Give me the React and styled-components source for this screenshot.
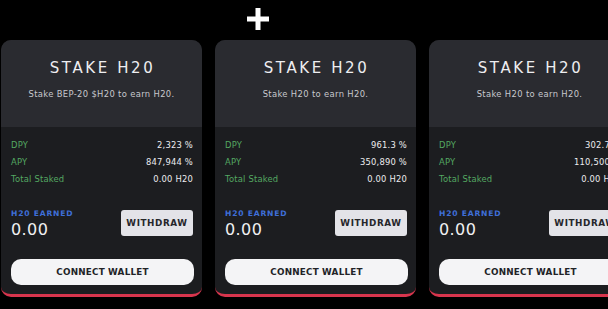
import React from "react";
import styled, { createGlobalStyle } from "styled-components";

const Global = createGlobalStyle`
  html, body { margin: 0; padding: 0; background: #000; overflow: hidden; }
  body { width: 608px; height: 309px; font-family: "DejaVu Sans", "Liberation Sans", sans-serif; }
`;

const Page = styled.div`
  width: 608px;
  height: 309px;
  overflow: hidden;
  background: #000;
  display: flex;
  flex-direction: column;
`;

const TopBar = styled.div`
  height: 40px;
  display: flex;
  align-items: flex-start;
  padding-left: 247px;
  padding-top: 8px;
  box-sizing: border-box;
`;

const Row = styled.div`
  display: flex;
  gap: 13px;
  padding-left: 1px;
`;

const Card = styled.div`
  flex: 0 0 201px;
  width: 201px;
  height: 257px;
  box-sizing: border-box;
  border-radius: 10px;
  overflow: hidden;
  background: #1c1d20;
  border-bottom: 3px solid #d8354d;
  display: flex;
  flex-direction: column;
`;

const Header = styled.div`
  height: 87px;
  background: #2a2b30;
  display: flex;
  flex-direction: column;
  align-items: center;
  padding-top: 20px;
  box-sizing: border-box;
`;

const Title = styled.div`
  color: #eeeef0;
  font-size: 15px;
  line-height: 16px;
  letter-spacing: 2.6px;
  font-weight: 400;
  margin-left: 2px;
`;

const Subtitle = styled.div`
  margin-top: 13px;
  color: #c8c9ce;
  font-size: 8.4px;
  line-height: 10px;
  letter-spacing: 0.35px;
`;

const Body = styled.div`
  padding: 9px 9px 0 10px;
  display: flex;
  flex-direction: column;
`;

const Stat = styled.div`
  display: flex;
  justify-content: space-between;
  height: 17px;
  align-items: center;
  font-size: 8.4px;
  letter-spacing: 0.2px;
`;

const Label = styled.span`
  color: #54a862;
`;

const Value = styled.span`
  color: #ececef;
  white-space: nowrap;
`;

const Earned = styled.div`
  margin-top: 22px;
  height: 32px;
  display: flex;
  justify-content: space-between;
  align-items: flex-start;
`;

const EarnedInfo = styled.div`
  display: flex;
  flex-direction: column;
`;

const EarnedLabel = styled.div`
  color: #3f6fd8;
  font-size: 7.6px;
  line-height: 10px;
  font-weight: 700;
  letter-spacing: 0.8px;
`;

const EarnedValue = styled.div`
  color: #f0f0f2;
  font-size: 16px;
  line-height: 22px;
  letter-spacing: 0.4px;
`;

const Withdraw = styled.button`
  margin-top: 1px;
  width: 72px;
  height: 26px;
  flex: 0 0 72px;
  border: none;
  border-radius: 3px;
  background: #e3e3e8;
  color: #26272b;
  font-family: inherit;
  font-size: 8.8px;
  font-weight: 700;
  letter-spacing: 0.6px;
  padding: 0;
  white-space: nowrap;
`;

const Connect = styled.button`
  margin-top: 18px;
  width: 183px;
  height: 26px;
  border: none;
  border-radius: 10px;
  background: #f4f4f6;
  color: #222327;
  font-family: inherit;
  font-size: 8.8px;
  font-weight: 700;
  letter-spacing: 0.2px;
  padding: 0;
`;

const Plus = () => (
  <svg width="22" height="22" viewBox="0 0 22 22">
    <rect x="8.5" y="0" width="5" height="22" fill="#fff" />
    <rect x="0" y="8.5" width="22" height="5" fill="#fff" />
  </svg>
);

const pools = [
  { sub: "Stake BEP-20 $H20 to earn H20.", dpy: "2,323 %", apy: "847,944 %" },
  { sub: "Stake H20 to earn H20.", dpy: "961.3 %", apy: "350,890 %" },
  { sub: "Stake H20 to earn H20.", dpy: "302.7 %", apy: "110,500 %" },
];

export default function App() {
  return (
    <Page>
      <Global />
      <TopBar>
        <Plus />
      </TopBar>
      <Row>
        {pools.map((p, i) => (
          <Card key={i}>
            <Header>
              <Title>STAKE H20</Title>
              <Subtitle>{p.sub}</Subtitle>
            </Header>
            <Body>
              <Stat>
                <Label>DPY</Label>
                <Value>{p.dpy}</Value>
              </Stat>
              <Stat>
                <Label>APY</Label>
                <Value>{p.apy}</Value>
              </Stat>
              <Stat>
                <Label>Total Staked</Label>
                <Value>0.00 H20</Value>
              </Stat>
              <Earned>
                <EarnedInfo>
                  <EarnedLabel>H20 EARNED</EarnedLabel>
                  <EarnedValue>0.00</EarnedValue>
                </EarnedInfo>
                <Withdraw>WITHDRAW</Withdraw>
              </Earned>
              <Connect>CONNECT WALLET</Connect>
            </Body>
          </Card>
        ))}
      </Row>
    </Page>
  );
}
